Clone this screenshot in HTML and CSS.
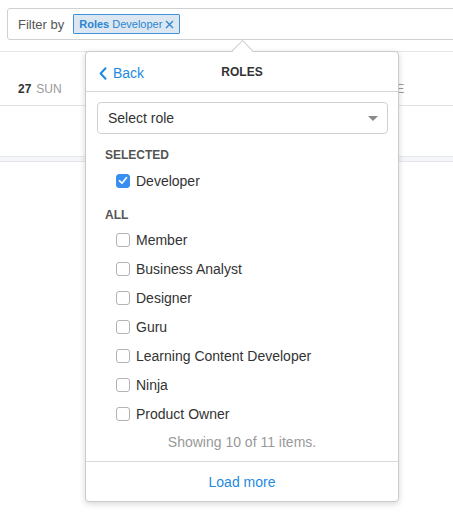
FILE: index.html
```html
<!DOCTYPE html>
<html>
<head>
<meta charset="utf-8">
<link rel="stylesheet" href="styles.css">
</head>
<body>
<div class="page">
  <div class="filter-bar">
    <span class="filter-label">Filter by</span>
    <span class="tag"><b class="tag-key">Roles</b><span class="tag-val">Developer</span><svg class="tag-x" width="9" height="9" viewBox="0 0 9 9"><path d="M1 1 L8 8 M8 1 L1 8" stroke="#2a86d4" stroke-width="1.3" fill="none"/></svg></span>
  </div>
  <div class="cal-head">
    <div class="day"><b>27</b><span class="dname">SUN</span></div>
    <div class="day"><b>28</b><span class="dname">MON</span></div>
    <div class="day"><b>29</b><span class="dname">TUE</span></div>
  </div>
  <div class="cal-row"></div>
  <div class="cal-band"></div>

  <div class="popover">
    <div class="arrow"></div>
    <div class="pop-head">
      <a class="back"><svg width="8" height="13" viewBox="0 0 8 13"><path d="M6.5 1.2 L1.6 6.5 L6.5 11.8" stroke="#1e8ae0" stroke-width="2" fill="none" stroke-linecap="round" stroke-linejoin="round"/></svg>Back</a>
      <span class="title">ROLES</span>
      <span></span>
    </div>
    <div class="select">Select role<span class="caret"></span></div>
    <div class="sec-title sel">SELECTED</div>
    <label class="item"><span class="cb checked"><svg width="10" height="9" viewBox="0 0 10 9"><path d="M1.5 4.8 L4 7.2 L8.6 1.6" stroke="#fff" stroke-width="1.6" fill="none" stroke-linecap="round" stroke-linejoin="round"/></svg></span>Developer</label>
    <div class="sec-title all">ALL</div>
    <label class="item"><span class="cb"></span>Member</label>
    <label class="item"><span class="cb"></span>Business Analyst</label>
    <label class="item"><span class="cb"></span>Designer</label>
    <label class="item"><span class="cb"></span>Guru</label>
    <label class="item"><span class="cb"></span>Learning Content Developer</label>
    <label class="item"><span class="cb"></span>Ninja</label>
    <label class="item"><span class="cb"></span>Product Owner</label>
    <div class="showing">Showing 10 of 11 items.</div>
    <div class="pop-foot"><a class="load">Load more</a></div>
  </div>
</div>
</body>
</html>
```
FILE: styles.css
```css
html, body {
  margin: 0;
  padding: 0;
  background: #fff;
  font-family: "Liberation Sans", Arial, sans-serif;
  color: #333;
  overflow: hidden;
}
.page {
  position: relative;
  width: 453px;
  height: 520px;
  overflow: hidden;
}
.filter-bar {
  margin: 8px -20px 0 7px;
  height: 32px;
  box-sizing: border-box;
  border: 1px solid #d0d0d0;
  border-radius: 3px;
  display: flex;
  align-items: center;
  padding-left: 10px;
}
.filter-label {
  font-size: 13px;
  color: #555;
}
.tag {
  margin-left: 9px;
  height: 20px;
  box-sizing: border-box;
  border: 1px solid #3b93dc;
  background: #dce7f1;
  color: #2a86d4;
  font-size: 11px;
  line-height: 13px;
  display: flex;
  align-items: center;
  padding: 0 5px 0 5px;
  border-radius: 1px;
}
.tag-key { font-weight: bold; }
.tag-val { margin-left: 3px; }
.tag-x { margin-left: 3px; }

.cal-head {
  margin-top: 11px;
  height: 55px;
  box-sizing: border-box;
  border-top: 1px solid #e6e6e6;
  border-bottom: 1px solid #e3e3e3;
  display: grid;
  grid-template-columns: repeat(3, 172px);
  align-items: end;
  padding-bottom: 9px;
}
.day {
  padding-left: 18px;
  font-size: 12px;
  line-height: 14px;
  color: #333;
}
.dname {
  color: #999;
  margin-left: 5px;
}
.cal-row {
  height: 50px;
}
.cal-band {
  height: 6px;
  box-sizing: border-box;
  border-top: 1px solid #e3e7eb;
  border-bottom: 1px solid #e3e7eb;
  background: #f4f6f8;
}

.popover {
  position: absolute;
  left: 85px;
  top: 51px;
  width: 314px;
  box-sizing: border-box;
  background: #fff;
  border: 1px solid #cbcbcb;
  border-radius: 4px;
  box-shadow: 0 2px 6px rgba(0,0,0,0.16);
}
.arrow {
  position: absolute;
  top: -9px;
  left: 149px;
  width: 15px;
  height: 15px;
  background: #fff;
  border-top: 1px solid #cbcbcb;
  border-left: 1px solid #cbcbcb;
  transform: rotate(45deg);
  box-sizing: border-box;
}
.pop-head {
  position: relative;
  height: 40px;
  box-sizing: border-box;
  border-bottom: 1px solid #d6d6d6;
  display: grid;
  grid-template-columns: 1fr auto 1fr;
  align-items: center;
  padding: 1px 0 0 0;
}
.back {
  display: flex;
  align-items: center;
  padding-left: 13px;
  padding-top: 2px;
  color: #1e8ae0;
  font-size: 14px;
  gap: 6px;
}
.title {
  font-size: 12px;
  font-weight: bold;
  color: #333;
}
.select {
  margin: 10px 10px 0 11px;
  height: 32px;
  box-sizing: border-box;
  border: 1px solid #d0d0d0;
  border-radius: 4px;
  display: flex;
  align-items: center;
  justify-content: space-between;
  padding: 0 9px 0 10px;
  font-size: 14px;
  color: #333;
}
.caret {
  width: 0;
  height: 0;
  border-left: 5px solid transparent;
  border-right: 5px solid transparent;
  border-top: 5px solid #8a8a8a;
}
.sec-title {
  margin-left: 19px;
  font-size: 12px;
  line-height: 16px;
  font-weight: bold;
  color: #555;
}
.sec-title.sel {
  margin-top: 13px;
  margin-bottom: 3px;
}
.sec-title.all {
  margin-top: 12px;
  margin-bottom: 2px;
}
.item {
  display: flex;
  align-items: center;
  height: 29px;
  padding-left: 30px;
  font-size: 14px;
  color: #333;
}
.cb {
  width: 14px;
  height: 14px;
  box-sizing: border-box;
  border: 1px solid #b3b3b3;
  border-radius: 3px;
  background: #fff;
  margin-right: 6px;
  display: flex;
  align-items: center;
  justify-content: center;
}
.cb.checked {
  background: #3a8ef2;
  border-color: #3a8ef2;
}
.showing {
  height: 33px;
  box-sizing: border-box;
  padding-top: 4px;
  line-height: 20px;
  text-align: center;
  font-size: 14px;
  color: #999;
}
.pop-foot {
  border-top: 1px solid #dadada;
  height: 40px;
  box-sizing: border-box;
  display: flex;
  align-items: center;
  justify-content: center;
}
.load {
  color: #1e8ae0;
  font-size: 14px;
}
```
